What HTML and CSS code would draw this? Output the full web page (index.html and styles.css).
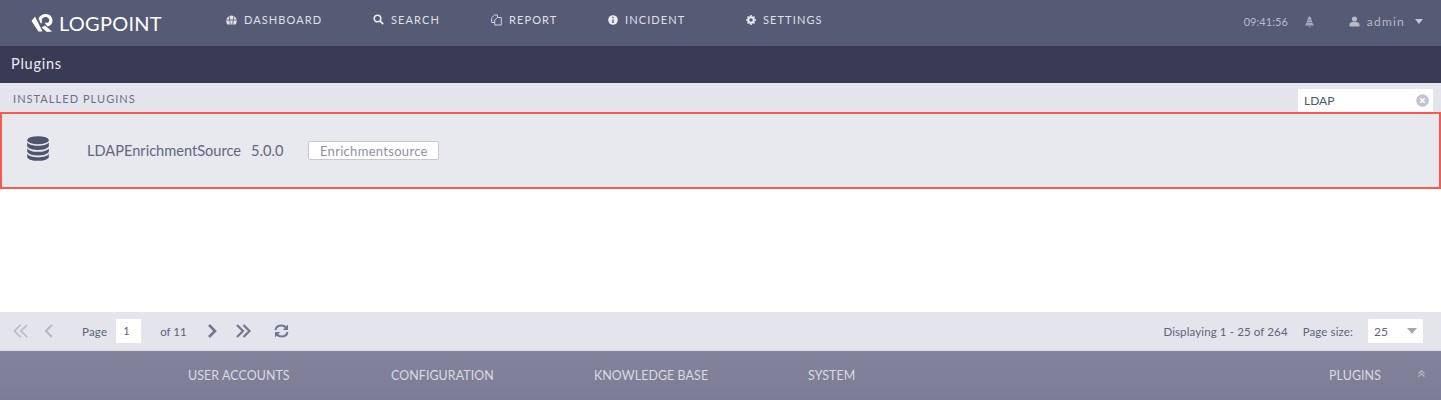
FILE: index.html
```html
<!DOCTYPE html>
<html lang="en">
<head>
<meta charset="utf-8">
<title>Plugins</title>
<link rel="stylesheet" href="styles.css">
</head>
<body>
<header class="topbar">
  <div class="logo">
    <svg class="logo-mark" width="22" height="20" viewBox="0 0 22 20"><path d="M4 3.500 L11.500 18.500 L7.500 18.500 L.5 8 Z" fill="#fff"/><path d="M10.500 14.500 L14 12.500 L21 18.500 L16 19 Z" fill="#fff"/><path d="M9.500 10 L7.500 5.500 C9 2.500 11.500 1 14.500 1 C18.500 1 21.500 3.800 21.500 7.500 C21.500 10.800 19.500 13 16.500 13.500 L13.500 9.800 L15 9.800 C17 9.800 18.300 8.800 18.300 7.200 C18.300 5.300 16.700 4 14.700 4 C12.500 4 10.800 5.500 10.800 7.500 C10.800 8.500 10.800 9.500 11 10.500 Z" fill="#fff"/></svg>
    <span class="logo-text">LOGPOINT</span>
  </div>
  <nav class="mainnav">
    <a class="navitem nav-dash"><svg width="11" height="10" viewBox="0 0 11 10"><path d="M5.500 .5 A5.200 5.200 0 0 0 .3 5.700 C.3 7.500 .8 8.700 1.500 9.500 H9.500 C10.200 8.700 10.700 7.500 10.700 5.700 A5.200 5.200 0 0 0 5.500 .5 Z" fill="#dfe0e8"/><path d="M3.300 1.500 L4.300 9.500 M7.700 1.500 L6.700 9.500 M.5 5 H10.500" stroke="#555a75" stroke-width=".8"/></svg>DASHBOARD</a>
    <a class="navitem nav-search"><svg width="11" height="11" viewBox="0 0 11 11"><circle cx="4.500" cy="4.500" r="3.300" fill="none" stroke="#ecedf2" stroke-width="1.600"/><path d="M7 7 L10.200 10.200" stroke="#ecedf2" stroke-width="1.800"/></svg>SEARCH</a>
    <a class="navitem nav-report"><svg width="11" height="12" viewBox="0 0 11 12"><path d="M6.500 3 V1 H3.500 L.7 3.800 V8.500 H3.500" fill="none" stroke="#dfe0e8" stroke-width=".9"/><path d="M6.500 3.500 H10.300 V11 H3.700 V6 Z" fill="none" stroke="#dfe0e8" stroke-width=".9"/></svg>REPORT</a>
    <a class="navitem nav-incident"><svg width="10" height="10" viewBox="0 0 10 10"><circle cx="5" cy="5" r="4.800" fill="#ecedf2"/><path d="M5 1.800 V3.200 M5 4.400 V8" stroke="#555a75" stroke-width="1.400"/></svg>INCIDENT</a>
    <a class="navitem nav-settings"><svg width="10" height="10" viewBox="0 0 10 10"><circle cx="5" cy="5" r="2.800" fill="none" stroke="#ecedf2" stroke-width="2"/><path d="M5 0 V10 M0 5 H10 M1.500 1.500 L8.500 8.500 M8.500 1.500 L1.500 8.500" stroke="#ecedf2" stroke-width="1.500" stroke-dasharray="1.800 6.400"/></svg>SETTINGS</a>
  </nav>
  <div class="userbox">
    <span class="clock">09:41:56</span>
    <svg class="bell" width="11" height="12" viewBox="0 0 11 12"><path d="M5.500 .5 C4.500 .5 4 1.500 3.800 2.500 L2.500 7 L1 9.500 H10 L8.500 7 L7.200 2.500 C7 1.500 6.500 .5 5.500 .5 Z M4.300 10.300 H6.700 L5.500 11.800 Z" fill="#a6a8bb"/><path d="M3.500 4 H7.500 M2.800 6.500 H8.200" stroke="#555a75" stroke-width=".5"/></svg>
    <svg class="user-ico" width="11" height="11" viewBox="0 0 11 11"><circle cx="5.500" cy="3" r="2.600" fill="#b9bbca"/><path d="M.5 10.500 V8.500 C.5 7 2 6 3.500 6 H7.500 C9 6 10.500 7 10.500 8.500 V10.500 Z" fill="#b9bbca"/></svg>
    <span class="username">admin</span>
    <span class="caret"></span>
  </div>
</header>

<div class="titlebar">Plugins</div>

<div class="subhead">
  <span class="subhead-label">INSTALLED PLUGINS</span>
  <div class="searchbox">
    <span>LDAP</span>
    <svg width="13" height="13" viewBox="0 0 13 13"><circle cx="6.500" cy="6.500" r="6.300" fill="#c3c4d0"/><path d="M4.300 4.300 L8.700 8.700 M8.700 4.300 L4.300 8.700" stroke="#fff" stroke-width="1.600"/></svg>
  </div>
</div>

<section class="plugin-row">
  <svg class="db-ico" width="22" height="25" viewBox="0 0 22 25"><ellipse cx="11" cy="4.200" rx="10.800" ry="4" fill="#50556f"/><path d="M.2 6.300 C2 9 6 9.800 11 9.800 C16 9.800 20 9 21.800 6.300 V10.500 C20 13 16 14 11 14 C6 14 2 13 .2 10.500 Z" fill="#50556f"/><path d="M.2 12.200 C2 14.800 6 15.800 11 15.800 C16 15.800 20 14.800 21.800 12.200 V16 C20 18.500 16 19.500 11 19.500 C6 19.500 2 18.500 .2 16 Z" fill="#50556f"/><path d="M.2 17.700 C2 20.300 6 21.200 11 21.200 C16 21.200 20 20.300 21.800 17.700 V21.500 C20 24 16 24.800 11 24.800 C6 24.800 2 24 .2 21.500 Z" fill="#50556f"/></svg>
  <span class="plugin-name">LDAPEnrichmentSource</span>
  <span class="plugin-version">5.0.0</span>
  <span class="plugin-tag">Enrichmentsource</span>
</section>

<main class="blank"></main>

<div class="pager">
  <svg class="pg-first dim" width="16" height="14" viewBox="0 0 16 14"><path d="M7.500 1 L1.500 7 L7.500 13 M14 1 L8 7 L14 13" fill="none" stroke="#b7b9c7" stroke-width="1.700"/></svg>
  <svg class="pg-prev dim" width="10" height="14" viewBox="0 0 10 14"><path d="M8 1 L2 7 L8 13" fill="none" stroke="#b7b9c7" stroke-width="2.200"/></svg>
  <span class="pg-page">Page</span>
  <span class="pg-input">1</span>
  <span class="pg-of">of 11</span>
  <svg class="pg-next" width="10" height="14" viewBox="0 0 10 14"><path d="M2 1 L8 7 L2 13" fill="none" stroke="#73768f" stroke-width="2.600"/></svg>
  <svg class="pg-last" width="16" height="14" viewBox="0 0 16 14"><path d="M2 1 L8 7 L2 13 M8.500 1 L14.500 7 L8.500 13" fill="none" stroke="#73768f" stroke-width="2.200"/></svg>
  <svg class="pg-refresh" width="15" height="14" viewBox="0 0 15 14"><path d="M1.500 6 C2 3 4.500 1.500 7.500 1.500 C9.500 1.500 11 2.300 12 3.500 M13.500 8 C13 11 10.500 12.500 7.500 12.500 C5.500 12.500 4 11.700 3 10.500" fill="none" stroke="#73768f" stroke-width="2"/><path d="M14 .5 V6 H8.800 Z M1 13.500 V8 H6.200 Z" fill="#73768f"/></svg>
  <span class="pg-display">Displaying 1 - 25 of 264</span>
  <span class="pg-size">Page size:</span>
  <span class="pg-select">25<span class="pg-caret"></span></span>
</div>

<footer class="footbar">
  <a class="fitem f-user">USER ACCOUNTS</a>
  <a class="fitem f-config">CONFIGURATION</a>
  <a class="fitem f-kb">KNOWLEDGE BASE</a>
  <a class="fitem f-sys">SYSTEM</a>
  <a class="fitem f-plugins">PLUGINS</a>
  <svg class="f-up" width="7" height="7" viewBox="0 0 7 7"><path d="M.5 3.500 L3.500 .8 L6.500 3.500 M.5 6.500 L3.500 3.800 L6.500 6.500" fill="none" stroke="#b5b6c6" stroke-width="1.300"/></svg>
</footer>
</body>
</html>
```
FILE: styles.css
```css
* { box-sizing: border-box; }
html, body { margin: 0; padding: 0; }
body {
  width: 1441px;
  height: 400px;
  overflow: hidden;
  display: flex;
  flex-direction: column;
  background: #fff;
  font-family: Lato, "Open Sans", sans-serif;
  color: #50556f;
}
svg { display: block; flex: none; }

.topbar {
  height: 46px;
  flex: none;
  display: flex;
  align-items: center;
  background: #555a75;
  padding-left: 31px;
}
.logo { display: flex; align-items: center; width: 195px; margin-top: -1px; }
.logo-text { font-size: 20px; font-weight: 400; color: #fff; margin-left: 6px; letter-spacing: .25px; margin-top: 1px; }
.mainnav { display: flex; align-items: center; margin-top: -7px; }
.navitem {
  display: flex;
  align-items: center;
  gap: 7px;
  font-size: 11px;
  letter-spacing: 1.1px;
  color: #dfe0e8;
}
.nav-dash { width: 147px; }
.nav-search { width: 118px; }
.nav-report { width: 117px; }
.nav-incident { width: 138px; }
.userbox { display: flex; align-items: center; margin-left: auto; padding-right: 18px; color: #b9bbca; margin-top: -3px; }
.clock { font-size: 11px; letter-spacing: .05px; }
.bell { margin-left: 16px; }
.user-ico { margin-left: 34px; }
.username { font-size: 12px; letter-spacing: 1.2px; margin-left: 7px; margin-top: -1px; }
.caret { width: 0; height: 0; margin-left: 10px; margin-top: -1px; border: 4px solid transparent; border-top: 5px solid #c5c6d3; border-bottom: 0; }

.titlebar {
  height: 37px;
  flex: none;
  display: flex;
  align-items: center;
  padding: 0 0 2px 11px;
  background: #393b54;
  color: #eceef3;
  font-size: 14.500px;
  letter-spacing: .75px;
}

.subhead {
  height: 29px;
  flex: none;
  display: flex;
  align-items: center;
  justify-content: space-between;
  background: #e4e5ec;
  padding: 6px 8px 0 13px;
}
.subhead-label { font-size: 11px; letter-spacing: 1.05px; color: #6a6e88; margin-top: -4px; }
.searchbox {
  width: 135px;
  height: 23px;
  display: flex;
  align-items: center;
  justify-content: space-between;
  background: #fff;
  padding: 0 4px 0 6px;
  font-size: 12px;
  color: #50556f;
}

.plugin-row {
  height: 77px;
  flex: none;
  display: flex;
  align-items: center;
  background: #e8e9ee;
  border: 2px solid #f9594e;
  padding-left: 25px;
}
.db-ico { margin-top: -4px; }
.plugin-name { margin-left: 38px; font-size: 14.600px; color: #62667f; }
.plugin-version { margin-left: 10px; font-size: 14.600px; color: #62667f; }
.plugin-tag {
  margin-left: 25px;
  width: 131px;
  height: 19px;
  display: flex;
  align-items: center;
  justify-content: center;
  background: #fff;
  border: 1px solid #c6c7d2;
  border-radius: 2px;
  font-size: 13px;
  letter-spacing: .3px;
  color: #8e90a6;
}

.blank { flex: 1; }

.pager {
  height: 39px;
  flex: none;
  display: flex;
  align-items: center;
  background: #e4e5ec;
  border-bottom: 1px solid #d8d9e2;
  padding-left: 13px;
  font-size: 11.500px;
  color: #5e627c;
}
.pg-prev { margin-left: 15px; }
.pg-page { margin-left: 28px; letter-spacing: .2px; }
.pg-input { width: 25px; height: 24px; margin-left: 9px; background: #fff; padding: 5px 0 0 7px; font-size: 11px; }
.pg-of { margin-left: 19px; }
.pg-next { margin-left: 20px; }
.pg-last { margin-left: 18px; }
.pg-refresh { margin-left: 23px; }
.pg-display { margin-left: auto; letter-spacing: .12px; }
.pg-size { margin-left: 15px; letter-spacing: .12px; }
.pg-select {
  width: 55px;
  height: 24px;
  margin-left: 15px;
  margin-right: 18px;
  background: #fff;
  display: flex;
  align-items: center;
  justify-content: space-between;
  padding: 0 6px;
  font-size: 12px;
}
.pg-caret { width: 0; height: 0; border: 5px solid transparent; border-top: 6px solid #a5a7b9; border-bottom: 0; }

.footbar {
  height: 49px;
  flex: none;
  display: flex;
  align-items: center;
  background: linear-gradient(#83849b, #7c7d95);
  padding: 0 16px 0 188px;
}
.fitem { font-size: 12.400px; color: #d9dae3; letter-spacing: .1px; }
.f-user { width: 203px; }
.f-config { width: 203px; }
.f-kb { width: 214px; }
.f-plugins { margin-left: auto; }
.f-up { margin-left: 37px; margin-top: -4px; }
```
